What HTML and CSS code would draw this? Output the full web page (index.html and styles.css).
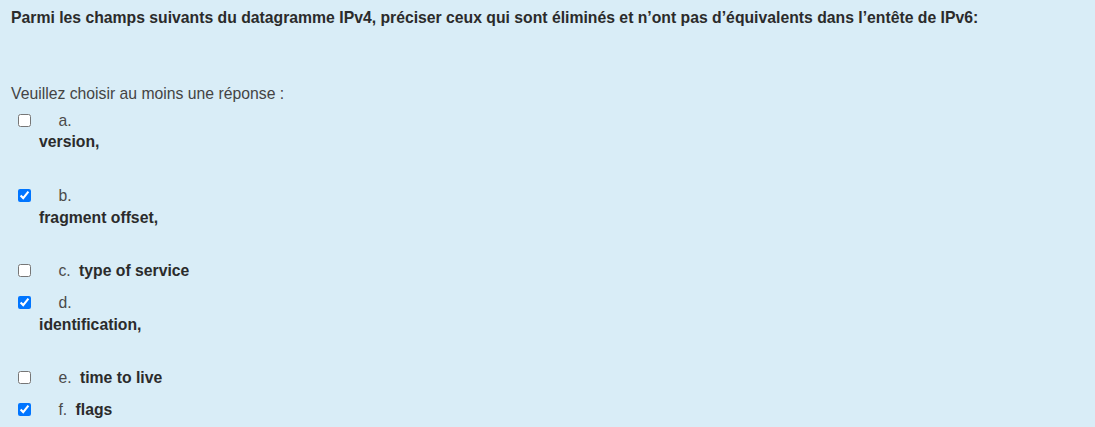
FILE: index.html
```html
<!DOCTYPE html>
<html lang="fr">
<head>
<meta charset="utf-8">
<link rel="stylesheet" href="styles.css">
</head>
<body>
<div class="formulation">
  <p class="qtext">Parmi les champs suivants du datagramme IPv4, préciser ceux qui sont éliminés et n’ont pas d’équivalents dans l’entête de IPv6:</p>
  <div class="prompt">Veuillez choisir au moins une réponse :</div>
  <div class="answers">
    <div class="row">
      <input type="checkbox" class="cb">
      <span class="num">a.</span>
      <p class="atext">version,</p>
    </div>
    <div class="row">
      <input type="checkbox" class="cb" checked>
      <span class="num">b.</span>
      <p class="atext">fragment offset,</p>
    </div>
    <div class="row">
      <input type="checkbox" class="cb">
      <span class="num">c.</span> <span class="inl">type of service</span>
    </div>
    <div class="row">
      <input type="checkbox" class="cb" checked>
      <span class="num">d.</span>
      <p class="atext">identification,</p>
    </div>
    <div class="row">
      <input type="checkbox" class="cb">
      <span class="num">e.</span> <span class="inl">time to live</span>
    </div>
    <div class="row">
      <input type="checkbox" class="cb" checked>
      <span class="num">f.</span> <span class="inl">flags</span>
    </div>
  </div>
</div>
</body>
</html>
```
FILE: styles.css
```css
html, body {
  margin: 0;
  padding: 0;
  background: #d9edf7;
}
.formulation {
  font-family: "Liberation Sans", Arial, sans-serif;
  font-size: 15.75px;
  line-height: 21.6px;
  color: #2b2b2b;
  padding: 7px 11px 0 11px;
}
.qtext {
  margin: 0 0 54.5px 0;
  font-weight: bold;
}
.prompt {
  color: #444;
}
.row {
  padding: 5.2px 0;
}
.cb {
  width: 13px;
  height: 13px;
  margin: 0 0 0 7px;
  vertical-align: -1px;
}
.num {
  margin-left: 23px;
  margin-right: 4px;
  color: #4a4a4a;
}
.atext {
  margin: 0 0 21.6px 28px;
  font-weight: bold;
}
.inl {
  font-weight: bold;
}
```
